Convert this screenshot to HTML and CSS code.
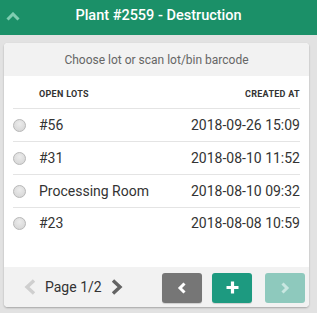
FILE: index.html
```html
<!DOCTYPE html>
<html>
<head>
<meta charset="utf-8">
<link rel="stylesheet" href="styles.css">
</head>
<body>
<header class="topbar">
  <span class="topbar-icon">
    <svg width="14" height="9" viewBox="0 0 14 9"><path d="M1.5 7.5 L7 2 L12.5 7.5" fill="none" stroke="#7fcdb1" stroke-width="3"/></svg>
  </span>
  <h1 class="title">Plant #2559 - Destruction</h1>
  <span></span>
</header>
<main class="card">
  <div class="card-head">Choose lot or scan lot/bin barcode</div>
  <div class="card-body">
    <table class="lots">
      <thead>
        <tr><th class="col-radio"></th><th class="col-name">Open lots</th><th class="col-date">Created at</th></tr>
      </thead>
      <tbody>
        <tr><td class="col-radio"><span class="radio"></span></td><td class="col-name">#56</td><td class="col-date">2018-09-26 15:09</td></tr>
        <tr><td class="col-radio"><span class="radio"></span></td><td class="col-name">#31</td><td class="col-date">2018-08-10 11:52</td></tr>
        <tr><td class="col-radio"><span class="radio"></span></td><td class="col-name">Processing Room</td><td class="col-date">2018-08-10 09:32</td></tr>
        <tr><td class="col-radio"><span class="radio"></span></td><td class="col-name">#23</td><td class="col-date">2018-08-08 10:59</td></tr>
      </tbody>
    </table>
  </div>
  <div class="card-foot">
    <div class="pager">
      <svg class="pg-arrow" width="12" height="16" viewBox="0 0 12 16"><path d="M10 1.5 L3 8 L10 14.5" fill="none" stroke="#cfcfcf" stroke-width="3.4"/></svg>
      <span class="pg-text">Page 1/2</span>
      <svg class="pg-arrow" width="12" height="16" viewBox="0 0 12 16"><path d="M2 1.5 L9 8 L2 14.5" fill="none" stroke="#646464" stroke-width="3.4"/></svg>
    </div>
    <div class="actions">
      <button class="btn btn-back"><svg width="10" height="12" viewBox="0 0 10 12"><path d="M7.5 1.5 L3 6 L7.5 10.5" fill="none" stroke="#fff" stroke-width="3"/></svg></button>
      <button class="btn btn-add"><svg width="13" height="13" viewBox="0 0 13 13"><path d="M6.5 0.5 V12.5 M0.5 6.5 H12.5" fill="none" stroke="#fff" stroke-width="3.2"/></svg></button>
      <button class="btn btn-next"><svg width="10" height="12" viewBox="0 0 10 12"><path d="M2.5 1.5 L7 6 L2.5 10.5" fill="none" stroke="#c9e7e1" stroke-width="3"/></svg></button>
    </div>
  </div>
</main>
</body>
</html>
```
FILE: styles.css
```css
* { box-sizing: border-box; }
html, body { margin: 0; padding: 0; }
body {
  background: #e2e2e2;
  font-family: Roboto, "Liberation Sans", Arial, sans-serif;
  color: #333;
  width: 317px;
  height: 313px;
  overflow: hidden;
}
.topbar {
  height: 35px;
  background: #1b9068;
  display: grid;
  grid-template-columns: 40px 1fr 40px;
  align-items: center;
}
.topbar-icon {
  display: flex;
  padding-left: 6px;
  padding-bottom: 3px;
}
.title {
  margin: 0;
  font-size: 14.5px;
  font-weight: 500;
  color: #fff;
  text-align: center;
  line-height: 1;
  padding-bottom: 2px;
}
.card {
  margin: 8px 8px 0 4px;
  background: #fff;
  border-radius: 4px;
  box-shadow: 0 1px 2px rgba(0,0,0,0.28);
  overflow: hidden;
}
.card-head {
  height: 33px;
  background: #f2f2f2;
  color: #666;
  font-size: 12px;
  display: flex;
  align-items: center;
  justify-content: center;
}
.card-body {
  padding: 0 9px 28px 9px;
}
.lots {
  width: 100%;
  border-collapse: collapse;
}
.lots th {
  height: 32px;
  font-size: 9px;
  font-weight: 700;
  letter-spacing: 0.3px;
  text-transform: uppercase;
  color: #333;
  border-bottom: 1px solid #e4e4e4;
  padding: 0;
  padding-top: 4px;
}
.lots td {
  height: 33px;
  font-size: 14px;
  padding: 0;
  border-bottom: 1px solid #e4e4e4;
  color: #333;
}
.lots tbody tr:last-child td { border-bottom: none; height: 32px; }
.col-radio { width: 26px; text-align: left; }
.col-name { text-align: left; }
.col-date { text-align: right; }
.radio {
  display: block;
  width: 13px;
  height: 13px;
  border-radius: 50%;
  border: 1px solid #b9b9b9;
  background: radial-gradient(circle at 50% 35%, #ececec, #d2d2d2);
  margin-top: 1px;
}
.card-foot {
  height: 40px;
  background: #f2f2f2;
  display: flex;
  align-items: center;
  justify-content: space-between;
  padding: 0 4px 0 20px;
}
.pager {
  display: flex;
  align-items: center;
  gap: 9px;
}
.pg-arrow { display: block; }
.pg-text {
  font-size: 14px;
  color: #333;
}
.actions {
  display: flex;
  gap: 10px;
  padding-top: 1px;
}
.btn {
  width: 40px;
  height: 30px;
  border: none;
  border-radius: 3px;
  display: flex;
  align-items: center;
  justify-content: center;
  padding: 0;
  box-shadow: 0 1px 1px rgba(0,0,0,0.15);
}
.btn-back { background: #767676; }
.btn-add { background: #1d9a80; }
.btn-next { background: #8ec9bd; margin-left: 3px; box-shadow: none; }
```
